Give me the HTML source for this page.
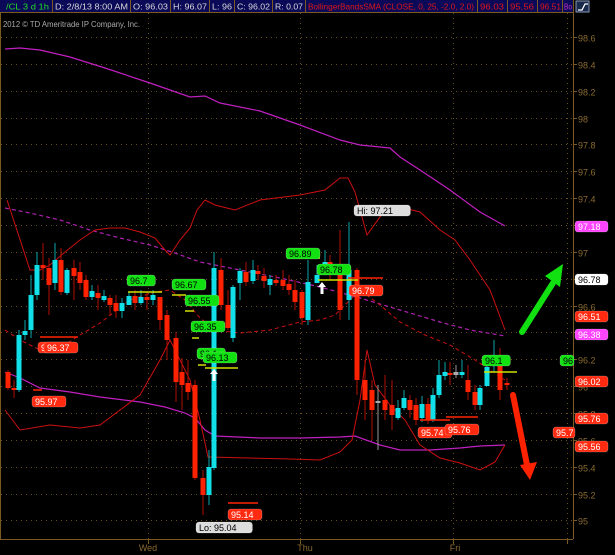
<!DOCTYPE html>
<html><head><meta charset="utf-8"><style>
html,body{margin:0;padding:0;background:#000;width:615px;height:555px;overflow:hidden}
svg{display:block;font-family:"Liberation Sans",sans-serif}
</style></head><body>
<svg id="s" width="615" height="555" viewBox="0 0 615 555" xmlns="http://www.w3.org/2000/svg">
<rect width="615" height="555" fill="#000"/>
<g id="grid"></g>
<!-- header -->
<rect x="0" y="0" width="573" height="12" fill="#0a0a58"/>
<g stroke="#7a5a20" stroke-width="1">
<line x1="0" y1="12.5" x2="573" y2="12.5"/>
<line x1="52.5" y1="0" x2="52.5" y2="12"/><line x1="130.5" y1="0" x2="130.5" y2="12"/>
<line x1="170.5" y1="0" x2="170.5" y2="12"/><line x1="209.5" y1="0" x2="209.5" y2="12"/>
<line x1="234.5" y1="0" x2="234.5" y2="12"/><line x1="272.5" y1="0" x2="272.5" y2="12"/>
<line x1="305.5" y1="0" x2="305.5" y2="12"/><line x1="477.5" y1="0" x2="477.5" y2="12"/>
<line x1="507.5" y1="0" x2="507.5" y2="12"/><line x1="537.5" y1="0" x2="537.5" y2="12"/>
<line x1="562.5" y1="0" x2="562.5" y2="12"/>
<line x1="0.5" y1="12" x2="0.5" y2="539"/>
<line x1="573.5" y1="0" x2="573.5" y2="539"/>
<line x1="0" y1="539.5" x2="573" y2="539.5"/>
</g>
<g font-size="8.5" fill="#d8d8d8">
<text x="6" y="9.5" fill="#22dd22" textLength="43" lengthAdjust="spacingAndGlyphs">/CL 3 d 1h</text>
<text x="55" y="9.5" textLength="73" lengthAdjust="spacingAndGlyphs">D: 2/8/13 8:00 AM</text>
<text x="133" y="9.5" textLength="35" lengthAdjust="spacingAndGlyphs">O: 96.03</text>
<text x="173" y="9.5" textLength="34" lengthAdjust="spacingAndGlyphs">H: 96.07</text>
<text x="212" y="9.5" textLength="20" lengthAdjust="spacingAndGlyphs">L: 96</text>
<text x="237" y="9.5" textLength="33" lengthAdjust="spacingAndGlyphs">C: 96.02</text>
<text x="275" y="9.5" textLength="28" lengthAdjust="spacingAndGlyphs">R: 0.07</text>
<text x="308" y="9.5" fill="#e01818" textLength="166" lengthAdjust="spacingAndGlyphs">BollingerBandsSMA (CLOSE, 0, 25, -2.0, 2.0)</text>
<text x="480" y="9.5" fill="#e01818" textLength="24" lengthAdjust="spacingAndGlyphs">96.03</text>
<text x="510" y="9.5" fill="#e01818" textLength="24" lengthAdjust="spacingAndGlyphs">95.56</text>
<text x="540" y="9.5" fill="#e01818" textLength="21" lengthAdjust="spacingAndGlyphs">96.51</text>
<text x="564" y="9.5" fill="#cc33cc" textLength="8" lengthAdjust="spacingAndGlyphs">Bo</text>
</g>
<rect x="576" y="1" width="13" height="11" fill="#1a2a4a" stroke="#8899bb"/>
<path d="M578 10 L582 10 L585 4 L588 4" stroke="#fff" fill="none" stroke-width="1.3"/>
<text x="3" y="27" font-size="8" fill="#aaa" textLength="137" lengthAdjust="spacingAndGlyphs">2012 © TD Ameritrade IP Company, Inc.</text>
<g id="lines" fill="none"></g>
<g id="candles"></g>
<g id="labels" font-size="9"></g>
<!-- arrows -->
<path d="M522 332 L553 283" stroke="#11e011" stroke-width="6" stroke-linecap="round"/>
<path d="M545 276 L563 264 L560 287 Z" fill="#11e011"/>
<path d="M513 395 L527 465" stroke="#ff2200" stroke-width="6" stroke-linecap="round"/>
<path d="M520 465 L530 480 L537 462 Z" fill="#ff2200"/>
<g font-size="9" fill="#8a6a30">
<text x="148" y="551" text-anchor="middle">Wed</text>
<text x="305" y="551" text-anchor="middle">Thu</text>
<text x="455" y="551" text-anchor="middle">Fri</text>
</g>
</svg>
<script>
var NS="http://www.w3.org/2000/svg";
function el(p,t,a,txt){var e=document.createElementNS(NS,t);for(var k in a)e.setAttribute(k,a[k]);if(txt!=null)e.textContent=txt;document.getElementById(p).appendChild(e);return e;}
function Y(p){return 37+(98.6-p)*134.3;}
for(var i=0;i<=18;i++){var p=98.6-i*0.2,y=Math.round(Y(p))+0.5;
el("grid","line",{x1:1,y1:y,x2:573,y2:y,stroke:"#6a5020","stroke-dasharray":"1,4"});
el("grid","line",{x1:573,y1:y,x2:577,y2:y,stroke:"#7a5a20"});
var lab=(Math.round(p*10)/10).toString();
el("grid","text",{x:578,y:y+4,"font-size":"9",fill:"#8a6a30"},lab);}
[148,300,453,567].forEach(function(x){el("grid","line",{x1:x+.5,y1:13,x2:x+.5,y2:539,stroke:"#6a5020","stroke-dasharray":"1,4"});
el("grid","line",{x1:x+.5,y1:539,x2:x+.5,y2:544,stroke:"#7a5a20"});});
function pl(pts,col,w,dash){el("lines","polyline",{points:pts,stroke:col,"stroke-width":w||1,"stroke-dasharray":dash||"none"});}
pl("5,49 20,48 40,50 70,57 105,68 150,83 190,97 205,96 220,103 260,111 300,125 340,140 360,145 380,147 390,148 400,157 420,170 450,190 480,212 505,226","#c020c0",1.2);
pl("5,208 30,213 60,220 90,230 120,238 150,245 175,253 200,262 240,270 280,278 320,287 360,298 400,310 440,322 470,330 505,336","#b020b0",1.2,"4,3");
pl("5,372 20,378 40,388 70,392 100,397 140,402 165,407 185,413 195,418 205,430 215,436 260,438 300,438 340,437 355,436 380,445 400,450 430,450 460,448 480,446 505,445","#c020c0",1.2);
pl("7,200 30,270 40,270 50,265 65,252 80,240 95,230 110,228 125,228 140,232 155,238 165,250 170,255 180,240 190,228 197,210 205,200 215,205 235,210 260,200 300,195 325,190 340,178 348,178 355,192 367,235 385,210 400,207 420,212 440,230 455,240 470,260 490,290 505,330","#cc1010",1);
pl("5,330 20,340 40,350 60,348 80,335 100,323 130,300 155,292 170,290 185,300 200,318 215,330 240,333 270,330 300,322 320,320 335,315 350,300 360,290 380,305 400,322 425,335 450,345 475,360 505,380","#cc1010",1,"4,3");
pl("5,410 20,430 50,425 80,428 100,425 120,410 140,395 160,360 170,340 180,360 190,380 200,420 208,457 250,458 290,459 320,460 340,452 352,440 360,400 367,350 375,385 390,405 405,420 420,445 440,458 460,463 480,470 495,462 505,445","#cc1010",1);
var C=[[8,372,388,370,390],[14,388,390,380,398],[19,390,335,330,392],[25,335,331,320,340],[31,330,295,275,338],[37,295,265,252,300],[43,265,268,243,280],[49,268,285,258,315],[55,283,260,243,290],[61,260,292,248,295],[67,293,270,268,295],[74,268,276,260,300],[80,272,283,262,290],[86,280,297,275,300],[92,297,291,285,300],[98,293,298,285,310],[104,300,296,290,302],[110,298,305,295,315],[116,303,311,295,318],[122,311,303,298,318],[129,305,296,292,305],[135,296,303,290,310],[141,303,297,290,305],[147,297,300,292,310],[153,300,295,290,305],[160,297,320,300,330],[167,315,340,310,360],[176,338,382,332,402],[182,372,385,358,410],[188,383,392,360,400],[195,385,478,380,480],[203,478,495,470,515],[209,495,467,450,505],[214,468,268,252,470],[221,270,305,258,310],[228,305,328,290,330],[233,338,287,285,342],[240,283,271,268,300],[246,272,282,262,286],[253,281,270,260,284],[258,271,274,265,280],[264,276,281,268,288],[270,285,279,275,295],[276,280,283,275,286],[283,280,286,270,290],[289,284,290,275,295],[295,290,302,280,310],[302,292,318,290,325],[308,320,282,260,325],[317,283,275,265,282],[325,275,262,250,268],[330,262,268,255,280],[340,270,310,230,320],[349,300,270,222,320],[357,270,380,268,395],[365,380,400,360,420],[372,390,410,380,440],[378,401,403,385,450,1],[385,400,410,375,420],[392,405,415,380,430],[398,418,408,400,420],[404,408,398,390,410],[410,400,410,395,418],[416,405,420,398,425],[422,418,404,396,422],[428,404,420,398,424],[433,420,395,388,422],[439,395,375,360,398],[445,376,372,362,380],[450,373,374,362,385],[456,372,375,365,378,1],[462,375,372,360,378],[468,380,392,365,400],[475,392,405,385,410],[480,405,388,385,410],[487,386,367,360,386],[494,366,355,340,372],[500,355,390,348,400],[507,383,385,378,390]];
C.forEach(function(c){var x=c[0],o=c[1],cl=c[2],h=c[3],l=c[4];
var col=c[5]?"#aaaaaa":(cl<o?"#11e0e8":"#ff2200");var wc=c[5]?"#999":(cl<o?"#0aa6aa":"#b01000");
el("candles","line",{x1:x,y1:h,x2:x,y2:l,stroke:wc,"stroke-width":1});
var t=Math.min(o,cl),b=Math.max(o,cl);if(b-t<2)b=t+2;
el("candles","rect",{x:x-2.5,y:t,width:5,height:b-t,fill:col});});
function hl(x1,x2,y,col){el("candles","line",{x1:x1,y1:y,x2:x2,y2:y,stroke:col,"stroke-width":1.5});}
hl(128,162,292,"#d0e000");hl(172,186,295,"#d0e000");hl(185,194,311,"#d0e000");hl(192,199,338,"#d0e000");hl(198,206,365,"#d0e000");hl(205,238,368,"#d0e000");
hl(287,320,258,"#d0e000");hl(318,358,280,"#d0e000");hl(484,517,372,"#d0e000");
hl(40,78,337,"#ff2200");hl(33,42,390,"#ff2200");hl(228,258,503,"#ff2200");hl(348,383,278,"#ff2200");hl(420,450,420,"#ff2200");hl(446,478,417,"#ff2200");
[[214,369],[322,282]].forEach(function(a){el("candles","path",{d:"M"+(a[0]-4)+" "+(a[1]+5)+" L"+a[0]+" "+a[1]+" L"+(a[0]+4)+" "+(a[1]+5)+" L"+(a[0]+1.5)+" "+(a[1]+5)+" L"+(a[0]+1.5)+" "+(a[1]+12)+" L"+(a[0]-1.5)+" "+(a[1]+12)+" L"+(a[0]-1.5)+" "+(a[1]+5)+"Z",fill:"#fff"});});
function bub(x,y,t,bg,fg,w){el("labels","rect",{x:x,y:y,width:w||(t.length*5.6+6),height:11,rx:3,fill:bg,stroke:"rgba(255,255,255,0.35)","stroke-width":0.6});
el("labels","text",{x:x+3,y:y+9,fill:fg},t);}
var G="#11e011";
bub(127,275,"96.7",G,"#000");bub(172,279,"96.67",G,"#000");bub(185,295,"96.55",G,"#000");bub(191,321,"96.35",G,"#000");
bub(197,348,"96.1",G,"#000");bub(203,352,"96.13",G,"#000");bub(286,248,"96.89",G,"#000");bub(317,264,"96.78",G,"#000");bub(482,355,"96.1",G,"#000");
var R="#ff2a10";
bub(38,342,"96.37",R,"#fff");bub(44,342,"96.37",R,"#fff");bub(32,396,"95.97",R,"#fff");bub(228,509,"95.14",R,"#fff");bub(349,285,"96.79",R,"#fff");
bub(418,427,"95.74",R,"#fff");bub(445,424,"95.76",R,"#fff");
bub(354,205,"Hi: 97.21","#ddd","#000");bub(196,522,"Lo: 95.04","#ddd","#000");
bub(575,221,"97.18","#ff44ff","#fff",33);bub(575,274,"96.78","#fff","#000",33);bub(575,311,"96.51",R,"#fff",33);
bub(575,329,"96.38","#ff44ff","#fff",33);bub(575,376,"96.02",R,"#fff",33);bub(575,413,"95.76",R,"#fff",33);bub(575,441,"95.56",R,"#fff",33);
bub(553,427,"95.7",R,"#fff",22);bub(560,355,"96",G,"#000",14);
</script>
</body></html>
